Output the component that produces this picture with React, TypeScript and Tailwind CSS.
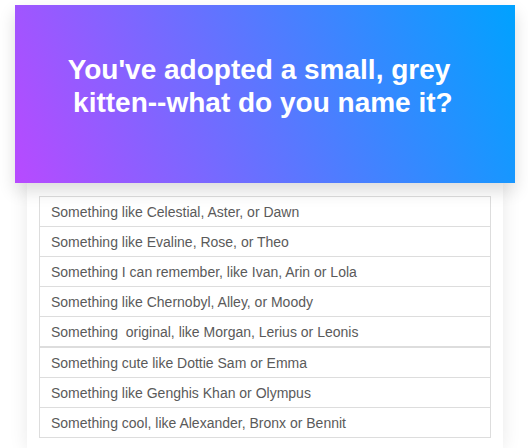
const options = [
  "Something like Celestial, Aster, or Dawn",
  "Something like Evaline, Rose, or Theo",
  "Something I can remember, like Ivan, Arin or Lola",
  "Something like Chernobyl, Alley, or Moody",
  "Something\u00a0 original, like Morgan, Lerius or Leonis",
  "Something cute like Dottie Sam or Emma",
  "Something like Genghis Khan or Olympus",
  "Something cool, like Alexander, Bronx or Bennit",
];

export default function App() {
  return (
    <div className="min-h-[448px] bg-white pt-[5px] font-['Liberation_Sans',Arial,sans-serif]">
      <header className="relative z-10 ml-[15px] w-[500px] h-[178px] bg-[linear-gradient(68deg,#b84aff,#00a2ff)] shadow-[0_8px_16px_rgba(0,0,0,0.14)] pt-[48px] pl-[38px] pr-[50px]">
        <h1 className="text-center text-[28px] leading-[33px] font-bold text-white">
          {"You've adopted a small, grey \u00a0kitten--what do you name it?"}
        </h1>
      </header>

      <main className="ml-[27px] w-[476px] bg-white shadow-[0_0_18px_rgba(0,0,0,0.09)] px-[12px] pt-[13px] pb-[12px]">
        <ul className="border-b border-[#dddddd]">
          {options.map((text, i) => (
            <li
              key={text}
              className={
                i === 5
                  ? "h-[31px] flex items-center border-x border-t-2 border-[#dddddd] px-[11px] text-[14px] leading-[20px] text-[#5a5a5a] whitespace-pre"
                  : "h-[30px] flex items-center border-x border-t border-[#dddddd] px-[11px] text-[14px] leading-[20px] text-[#5a5a5a] whitespace-pre"
              }
            >
              {text}
            </li>
          ))}
        </ul>
      </main>
    </div>
  );
}
